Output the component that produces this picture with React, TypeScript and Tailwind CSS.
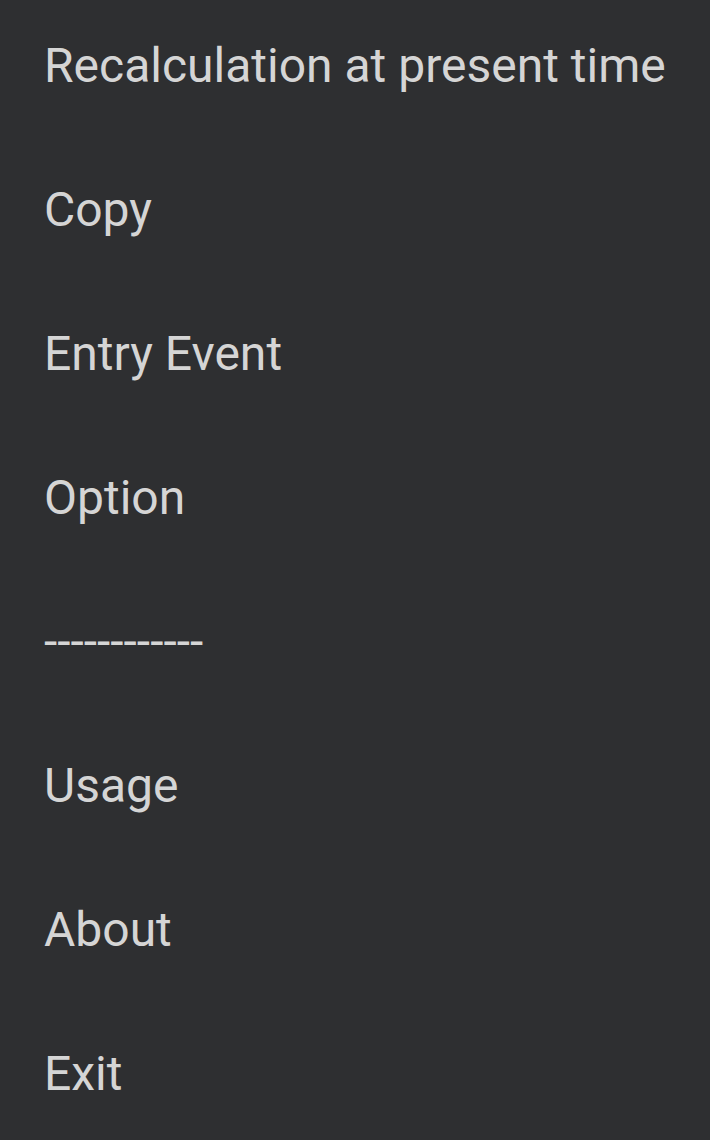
const items = [
  "Recalculation at present time",
  "Copy",
  "Entry Event",
  "Option",
  "------------",
  "Usage",
  "About",
  "Exit",
];

export default function App() {
  return (
    <div className="h-[1140px] w-[710px] overflow-hidden bg-[#2e2f31] font-['Roboto',sans-serif]">
      <ul className="mt-[-6px] flex flex-col">
        {items.map((label, i) => (
          <li
            key={i}
            className="flex h-[144px] items-center pl-[44px] text-[48px] leading-none text-[#d5d5d5]"
          >
            {label}
          </li>
        ))}
      </ul>
    </div>
  );
}
